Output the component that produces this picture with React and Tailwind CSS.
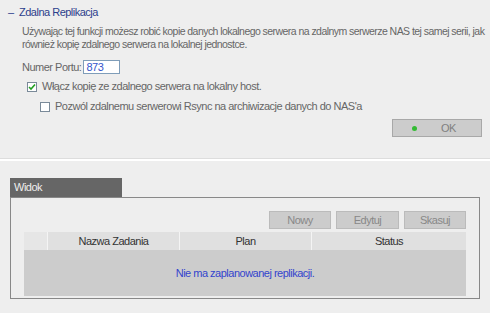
import React from 'react';

const App = () => {
  return (
    <div className="w-[490px] h-[313px] bg-[#eeeeee] overflow-hidden text-[11px] leading-[13px] tracking-[-0.5px] text-[#666666]" style={{ fontFamily: '"Liberation Sans", Arial, sans-serif' }}>
      {/* section header */}
      <div className="flex items-center pt-[6px] pl-[8px] text-[#2c3e8c]">
        <span className="w-[11px]">–</span>
        <span>Zdalna Replikacja</span>
      </div>

      <p className="mt-[6px] pl-[22px] whitespace-nowrap text-[10.5px] tracking-[-0.55px] leading-[13px]">
        Używając tej funkcji możesz robić kopie danych lokalnego serwera na zdalnym serwerze NAS tej samej serii, jak
        <br />
        również kopię zdalnego serwera na lokalnej jednostce.
      </p>

      <div className="mt-[9px] pl-[22px] flex items-center gap-[2px]">
        <span>Numer Portu:</span>
        <div className="w-[37px] h-[14px] bg-white border border-[#7f9db9] text-[#3355cc] pl-[2px] leading-[12px]">873</div>
      </div>

      <div className="mt-[6px] pl-[27px] flex items-center gap-[5px]">
        <span className="w-[10px] h-[10px] border border-[#7a8a99] bg-white flex items-center justify-center">
          <svg width="8" height="8" viewBox="0 0 8 8">
            <path d="M1 4 L3 6 L7 1.5" stroke="#22a022" strokeWidth="1.6" fill="none" />
          </svg>
        </span>
        <span>Włącz kopię ze zdalnego serwera na lokalny host.</span>
      </div>

      <div className="mt-[7px] pl-[40px] flex items-center gap-[5px]">
        <span className="w-[10px] h-[10px] border border-[#7a8a99] bg-white" />
        <span>Pozwól zdalnemu serwerowi Rsync na archiwizacje danych do NAS'a</span>
      </div>

      <div className="mt-[6px] flex justify-end pr-[8px]">
        <button className="w-[90px] h-[18px] bg-[#cccccc] border border-[#a8a8a8] flex items-center text-[#808080]">
          <span className="ml-[19px] w-[5px] h-[5px] rounded-full bg-[#33bb33]" />
          <span className="ml-[24px]">OK</span>
        </button>
      </div>

      <div className="mt-[21px] border-t border-[#dddddd] border-b-2 border-b-white" />

      {/* view tab */}
      <div className="mt-[17px] px-[10px]">
        <div className="w-[112px] h-[19px] bg-[#666666] text-[#eeeeee] pl-[4px] flex items-center">Widok</div>
        <div className="border border-[#888888] h-[102px] px-[13px] pt-[13px]">
          <div className="flex justify-end gap-[5px]">
            <button className="w-[62px] h-[18px] bg-[#cccccc] border border-[#bbbbbb] text-[#888888]">Nowy</button>
            <button className="w-[63px] h-[18px] bg-[#cccccc] border border-[#bbbbbb] text-[#888888]">Edytuj</button>
            <button className="w-[62px] h-[18px] bg-[#cccccc] border border-[#bbbbbb] text-[#888888]">Skasuj</button>
          </div>
          <div className="mt-[3px]">
            <div className="flex h-[18px] bg-[#e0e0e0] text-[#333333]">
              <div className="w-[24px] border-r border-[#f4f4f4] bg-[#e6e6e6]" />
              <div className="w-[132px] border-r border-[#f4f4f4] flex items-center justify-center">Nazwa Zadania</div>
              <div className="w-[132px] border-r border-[#f4f4f4] flex items-center justify-center">Plan</div>
              <div className="flex-1 flex items-center justify-center">Status</div>
            </div>
            <div className="h-[46px] bg-[#cccccc] flex items-center justify-center text-[#3344cc]">
              Nie ma zaplanowanej replikacji.
            </div>
          </div>
        </div>
      </div>
    </div>
  );
};

export default App;
